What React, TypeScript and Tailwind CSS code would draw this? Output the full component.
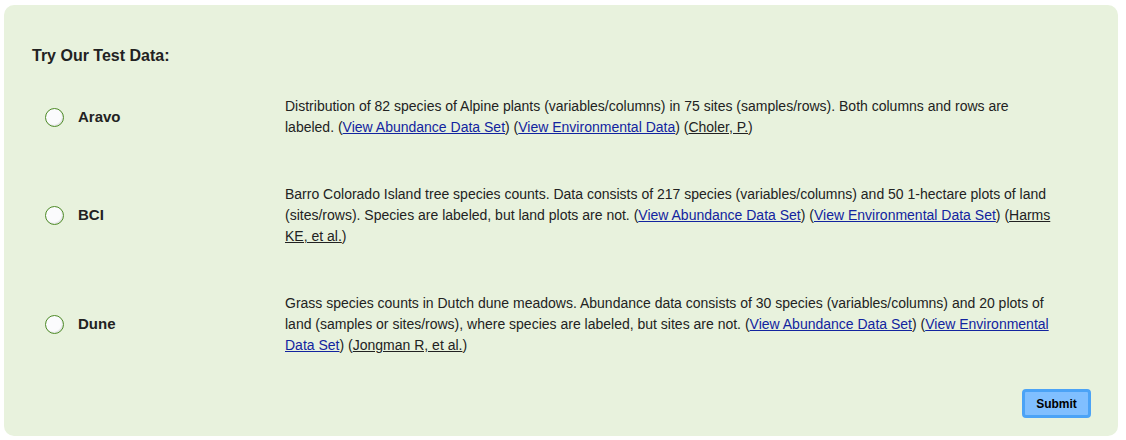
const rows = [
  {
    id: 'aravo',
    name: 'Aravo',
    text: 'Distribution of 82 species of Alpine plants (variables/columns) in 75 sites (samples/rows). Both columns and rows are labeled.',
    links: ['View Abundance Data Set', 'View Environmental Data'],
    cite: 'Choler, P.',
  },
  {
    id: 'bci',
    name: 'BCI',
    text: 'Barro Colorado Island tree species counts. Data consists of 217 species (variables/columns) and 50 1-hectare plots of land (sites/rows). Species are labeled, but land plots are not.',
    links: ['View Abundance Data Set', 'View Environmental Data Set'],
    cite: 'Harms KE, et al.',
  },
  {
    id: 'dune',
    name: 'Dune',
    text: 'Grass species counts in Dutch dune meadows. Abundance data consists of 30 species (variables/columns) and 20 plots of land (samples or sites/rows), where species are labeled, but sites are not.',
    links: ['View Abundance Data Set', 'View Environmental Data Set'],
    cite: 'Jongman R, et al.',
  },
]

function Radio() {
  return (
    <span className="block h-[19px] w-[19px] rounded-full border border-[#4d8a26] bg-[#fbfbfd] shadow-[inset_-1px_-1px_1px_rgba(0,0,0,0.1)]" />
  )
}

export default function App() {
  return (
    <div className="bg-white h-[440px] pt-[5px] pl-[4px] font-['Liberation_Sans',Arial,sans-serif] text-[#222]">
      <div className="w-[1114px] h-[431px] rounded-[10px] bg-[#e8f2dd] pt-[42px] pl-[28px] pr-[27px] flex flex-col">
        <h2 className="text-[16px] font-bold leading-[18px]">Try Our Test Data:</h2>

        <div className="mt-[8px] flex flex-col">
          {rows.map((r) => (
            <div key={r.id} className="flex items-center py-[23px]">
              <div className="w-[253px] flex items-center pl-[13px] gap-[14px]">
                <Radio />
                <span className="text-[15px] font-bold">{r.name}</span>
              </div>
              <p className="w-[775px] text-[14px] leading-[21px]">
                {r.text}{' '}
                {r.links.map((l) => (
                  <span key={l}>
                    (<a href="#" className="text-[#12249f] underline">{l}</a>){' '}
                  </span>
                ))}
                (<a href="#" className="underline">{r.cite}</a>)
              </p>
            </div>
          ))}
        </div>

        <div className="flex justify-end mt-[10px]">
          <button className="h-[29px] w-[69px] rounded-[4px] border-[3px] border-[#4ba3f6] bg-[#80bfff] text-[12px] font-bold text-black">
            Submit
          </button>
        </div>
      </div>
    </div>
  )
}
